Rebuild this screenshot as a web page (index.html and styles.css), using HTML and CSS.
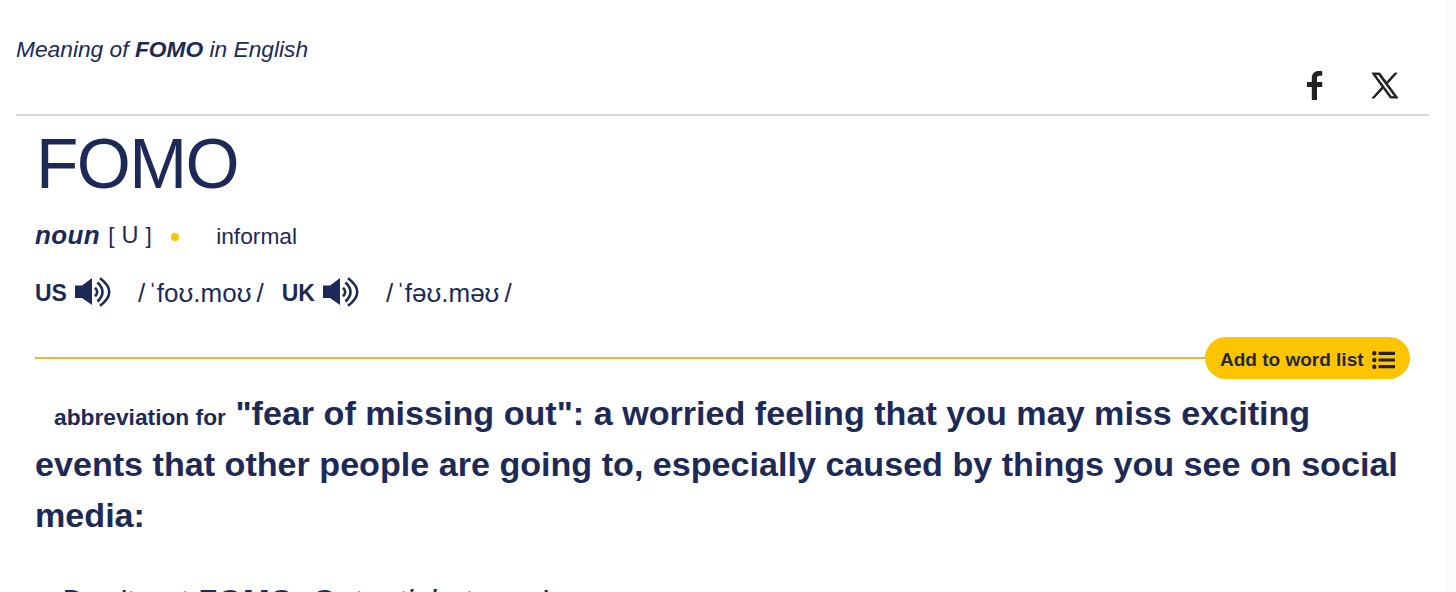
FILE: index.html
```
<!DOCTYPE html>
<html lang="en">
<head>
  <meta charset="UTF-8" />
  <meta name="viewport" content="width=device-width, initial-scale=1.0"/>
  <title>FOMO | meaning in English</title>
  <link rel="stylesheet" href="styles.css">
</head>
<body>

  <div class="page">
    <!-- Title and share links -->
    <header class="top">
      <p class="meaning">Meaning of <b>FOMO</b> in English</p>
      <div class="share">
        <svg class="icon-fb" viewBox="0 0 16 29" preserveAspectRatio="none"><path d="M4.8 29V16.1H0v-5H4.8V7.3C4.8 2.6 7.5 0 11.7 0c1.6 0 3 .1 3.5.2v4.6h-2.6c-2.1 0-2.6 1.1-2.6 2.6v3.7h5.2v5H10V29z"/></svg>
        <svg class="icon-x" viewBox="0 0 24 24" preserveAspectRatio="none"><path d="M14.3 10.2 23.2 0h-2.1l-7.7 8.8L7.2 0H0l9.3 13.4L0 24h2.1l8.2-9.3 6.5 9.3H24zM11.3 13.4l-.9-1.3L2.9 1.6h3.2l6.1 8.6.9 1.3 8 11.2h-3.2z"/></svg>
      </div>
    </header>

    <!-- Dictionary entry -->
    <main class="entry">
      <h1>FOMO</h1>

      <div class="grammar">
        <span class="pos">noun</span>
        <span class="code">[ <span class="letter">U</span> ]</span>
        <span class="dot"></span>
        <span class="usage">informal</span>
      </div>

      <div class="pron">
        <span class="region">US</span>
        <svg class="speaker" viewBox="0 0 36 30"><path class="fill" d="M0 8.5h7L17 1v27L7 21H0z"/><path d="M20 10.7q4.4 4.3 0 8.6M22.5 5.5q10 9.5 0 19M25 1.2q18.5 13.8 0 27.6"/></svg>
        <span class="ipa">/<i>ˈfoʊ.moʊ</i>/</span>
        <span class="region uk">UK</span>
        <svg class="speaker" viewBox="0 0 36 30"><path class="fill" d="M0 8.5h7L17 1v27L7 21H0z"/><path d="M20 10.7q4.4 4.3 0 8.6M22.5 5.5q10 9.5 0 19M25 1.2q18.5 13.8 0 27.6"/></svg>
        <span class="ipa">/<i>ˈfəʊ.məʊ</i>/</span>
      </div>

      <div class="divider">
        <span class="line"></span>
        <button class="word-list">
          Add to word list
          <svg class="icon-list" viewBox="0 0 23 18"><circle cx="2.3" cy="2.3" r="2.2"/><circle cx="2.3" cy="9" r="2.2"/><circle cx="2.3" cy="15.7" r="2.2"/><path d="M6.5.7H23v3.2H6.5zM6.5 7.4H23v3.2H6.5zM6.5 14.1H23v3.2H6.5z"/></svg>
        </button>
      </div>

      <h2 class="definition"><span class="label">abbreviation for</span> "fear of missing out": a worried feeling that you may miss exciting events that other people are going to, especially caused by things you see on social media:</h2>

      <p class="example">Don't get <b>FOMO</b>. Get a ticket now!</p>
    </main>
  </div>

</body>
</html>
```
FILE: styles.css
```
* {
  box-sizing: border-box;
}

body {
  margin: 0;
  height: 592px;
  overflow: hidden;
  background-color: #fcfcfc;
  color: #1d2a57;
  font-family: "Liberation Sans", Arial, sans-serif;
}

.page {
  width: 1446px;
  height: 592px;
  padding: 0 17px 0 16px;
  overflow: hidden;
  background-color: #fff;
}

.top {
  height: 116px;
  padding-top: 36px;
  border-bottom: 2px solid #d9d9d9;
}

.meaning {
  margin: 0;
  font-size: 22.75px;
  line-height: 26px;
  font-style: italic;
}

.share {
  display: flex;
  justify-content: flex-end;
  gap: 49px;
  padding: 9px 31px 0 0;
}

.share svg {
  fill: #222;
}

.icon-fb {
  width: 16px;
  height: 29px;
}

.icon-x {
  width: 26px;
  height: 25px;
  margin-top: 2px;
  stroke: #222;
  stroke-width: 0.9;
  overflow: visible;
}

.entry {
  padding: 0 19px;
}

h1 {
  margin: 10px 0 0 1px;
  font-size: 69.5px;
  line-height: 76px;
  font-weight: normal;
  letter-spacing: -1.6px;
}

.grammar {
  display: flex;
  align-items: center;
  height: 30px;
  margin-top: 18px;
  line-height: 30px;
}

.pos {
  font-size: 26px;
  font-weight: bold;
  font-style: italic;
  letter-spacing: 0.4px;
}

.code {
  margin-left: 8px;
  font-size: 22.5px;
  letter-spacing: 0.4px;
}

.letter {
  font-size: 23.5px;
}

.dot {
  width: 8px;
  height: 8px;
  margin: 4px 37px 0 19px;
  border-radius: 50%;
  background-color: #fec400;
}

.usage {
  padding-top: 2px;
  font-size: 22.75px;
}

.pron {
  display: flex;
  align-items: center;
  height: 34px;
  margin-top: 25px;
}

.region {
  padding-top: 3px;
  font-size: 23px;
  font-weight: bold;
}

.uk {
  margin-left: 18px;
}

.speaker {
  width: 36px;
  height: 30px;
  margin: 0 27px 0 8px;
  fill: none;
  stroke: #1d2a57;
  stroke-width: 2.6;
}

.speaker .fill {
  fill: #1d2a57;
  stroke: none;
}

.ipa {
  padding-top: 2px;
  font-size: 26px;
}

.ipa i {
  margin: 0 5px 0 3px;
  font-style: normal;
}

.divider {
  display: flex;
  align-items: center;
  margin-top: 28px;
}

.line {
  flex: 1;
  height: 2px;
  background-color: #f5b429;
}

.word-list {
  display: flex;
  align-items: center;
  gap: 8px;
  width: 205px;
  height: 42px;
  padding: 3px 0 0 15px;
  border: none;
  border-radius: 21px;
  background-color: #fec400;
  color: #1d2a40;
  font-family: inherit;
  font-size: 19px;
  font-weight: bold;
  white-space: nowrap;
}

.icon-list {
  width: 23px;
  height: 18px;
  fill: #222;
}

.definition {
  margin: 9px 0 0;
  font-size: 34.12px;
  line-height: 51px;
}

.label {
  margin-left: 19px;
  font-size: 22.75px;
  line-height: 1;
}

.example {
  margin: 39px 0 0 25px;
  font-size: 32px;
  line-height: 42px;
  font-style: italic;
}
```
